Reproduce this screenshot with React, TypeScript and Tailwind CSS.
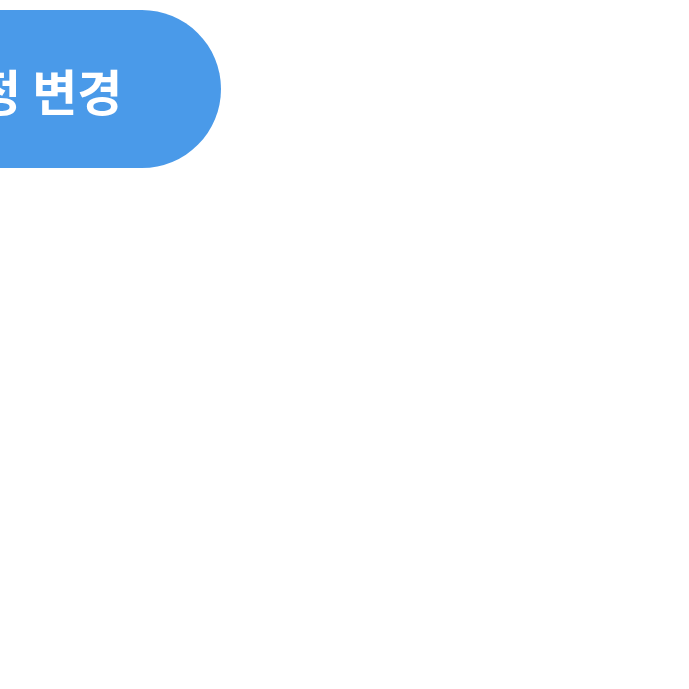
export default function App() {
  return (
    <div className="w-[689px] h-[689px] bg-white overflow-hidden">
      <div className="pt-[10px] ml-[-169px] flex">
        <button
          className="h-[158px] rounded-full bg-[#4a9ae9] pl-[100px] pr-[99px] flex items-center text-white text-[49px] font-bold leading-none whitespace-nowrap"
          style={{ fontFamily: '"Noto Sans CJK KR", "Noto Sans", sans-serif' }}
        >
          설정 변경
        </button>
      </div>
    </div>
  );
}
